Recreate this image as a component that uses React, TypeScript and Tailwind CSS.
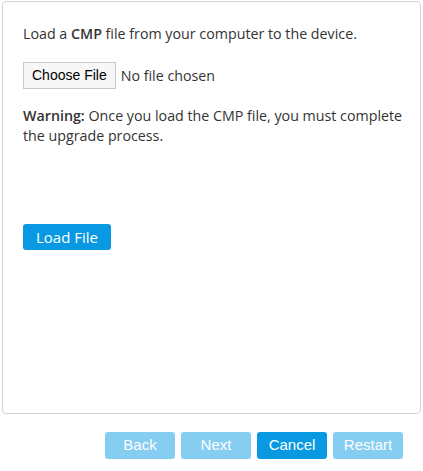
import React from 'react';

const navBtn = 'w-[70px] h-[27px] rounded-[3px] text-white text-[15px] font-["Liberation_Sans",Arial,sans-serif]';

export default function App() {
  return (
    <div className="w-[423px] h-[471px] bg-white font-['Open_Sans',sans-serif] text-[#333] text-[14.25px]">
      <div className="ml-[2px] mr-[2px] mt-[1px] h-[413px] border border-[#d3d3dc] rounded-[4px] pl-[20px] pr-[12px] pt-[22px]">
        <p className="leading-[20px]">
          Load a <b className="font-semibold">CMP</b> file from your computer to the device.
        </p>

        <div className="flex items-center mt-[18px]">
          <button className="h-[27px] px-[8px] border border-[#c8c8c8] bg-[#f7f7f7] text-black text-[14px] font-['Liberation_Sans',Arial,sans-serif]">
            Choose File
          </button>
          <span className="ml-[5px]">No file chosen</span>
        </div>

        <p className="mt-[17px] leading-[20px]">
          <b className="font-semibold">Warning:</b> Once you load the CMP file, you must complete the upgrade process.
        </p>

        <button className="mt-[78px] h-[26px] w-[88px] rounded-[3px] bg-[#0899e2] text-white text-[15px]">
          Load File
        </button>
      </div>

      <div className="flex justify-end gap-[6px] pr-[20px] mt-[18px]">
        <button className={`${navBtn} bg-[#86cdf2]`}>Back</button>
        <button className={`${navBtn} bg-[#86cdf2]`}>Next</button>
        <button className={`${navBtn} bg-[#0899e2]`}>Cancel</button>
        <button className={`${navBtn} bg-[#86cdf2]`}>Restart</button>
      </div>
    </div>
  );
}
